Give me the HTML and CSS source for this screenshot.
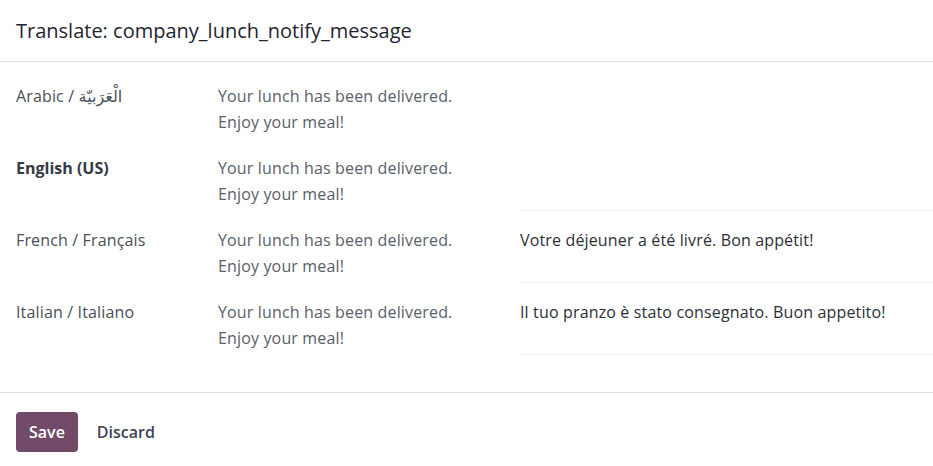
FILE: index.html
```html
<!DOCTYPE html>
<html lang="en">
<head>
<meta charset="utf-8">
<title>Translate</title>
<link rel="stylesheet" href="styles.css">
</head>
<body>
<div class="dialog">
  <header class="dialog-header">
    <h4 class="dialog-title">Translate: company_lunch_notify_message</h4>
  </header>
  <main class="dialog-body">
    <div class="tr-row">
      <div class="tr-lang">Arabic / <span dir="rtl">الْعَرَبيّة</span></div>
      <div class="tr-source">Your lunch has been delivered.<br>Enjoy your meal!</div>
      <div class="tr-value tr-value-empty"></div>
    </div>
    <div class="tr-row">
      <div class="tr-lang tr-lang-current">English (US)</div>
      <div class="tr-source">Your lunch has been delivered.<br>Enjoy your meal!</div>
      <div class="tr-value"></div>
    </div>
    <div class="tr-row">
      <div class="tr-lang">French / Français</div>
      <div class="tr-source">Your lunch has been delivered.<br>Enjoy your meal!</div>
      <div class="tr-value">Votre déjeuner a été livré. Bon appétit!</div>
    </div>
    <div class="tr-row">
      <div class="tr-lang">Italian / Italiano</div>
      <div class="tr-source">Your lunch has been delivered.<br>Enjoy your meal!</div>
      <div class="tr-value">Il tuo pranzo è stato consegnato. Buon appetito!</div>
    </div>
  </main>
  <footer class="dialog-footer">
    <button class="btn btn-primary">Save</button>
    <button class="btn btn-link">Discard</button>
  </footer>
</div>
</body>
</html>
```

FILE: styles.css
```css
html, body {
  margin: 0;
  padding: 0;
  background: #ffffff;
}

body {
  font-family: "Open Sans", "Noto Sans", "DejaVu Sans", sans-serif;
  font-size: 16px;
  letter-spacing: 0.15px;
  color: #4a4f57;
  overflow: hidden;
}

.dialog {
  width: 100%;
  min-width: 960px;
}

.dialog-header {
  height: 62px;
  box-sizing: border-box;
  border-bottom: 1px solid #dcdde0;
  padding: 0 16px;
  display: flex;
  align-items: center;
}

.dialog-title {
  margin: 0;
  font-size: 20px;
  font-weight: 500;
  color: #1f2530;
  letter-spacing: 0;
}

.dialog-body {
  padding: 21px 0 21px 16px;
}

.tr-row {
  display: grid;
  grid-template-columns: 202px 302px 1fr;
  height: 72px;
  line-height: 26px;
}

.tr-lang {
  color: #4a4f57;
}

.tr-lang-current {
  font-weight: 700;
  letter-spacing: 0;
  color: #343a45;
}

.tr-source {
  color: #5a6069;
}

.tr-value {
  height: 55px;
  border-bottom: 1px solid #efefef;
  color: #2b2f36;
}

.tr-value-empty {
  border-bottom-color: transparent;
}

.dialog-footer {
  border-top: 1px solid #dcdde0;
  padding: 19px 16px 0;
  display: flex;
  align-items: center;
  gap: 3px;
}

.btn {
  font-family: inherit;
  font-size: 16px;
  font-weight: 600;
  letter-spacing: 0;
  border: 0;
  border-radius: 4px;
  height: 40px;
  padding: 0 13px;
  cursor: pointer;
}

.btn-primary {
  background: #714b67;
  color: #ffffff;
}

.btn-link {
  background: transparent;
  color: #3d4452;
  padding: 0 16px;
}
```
